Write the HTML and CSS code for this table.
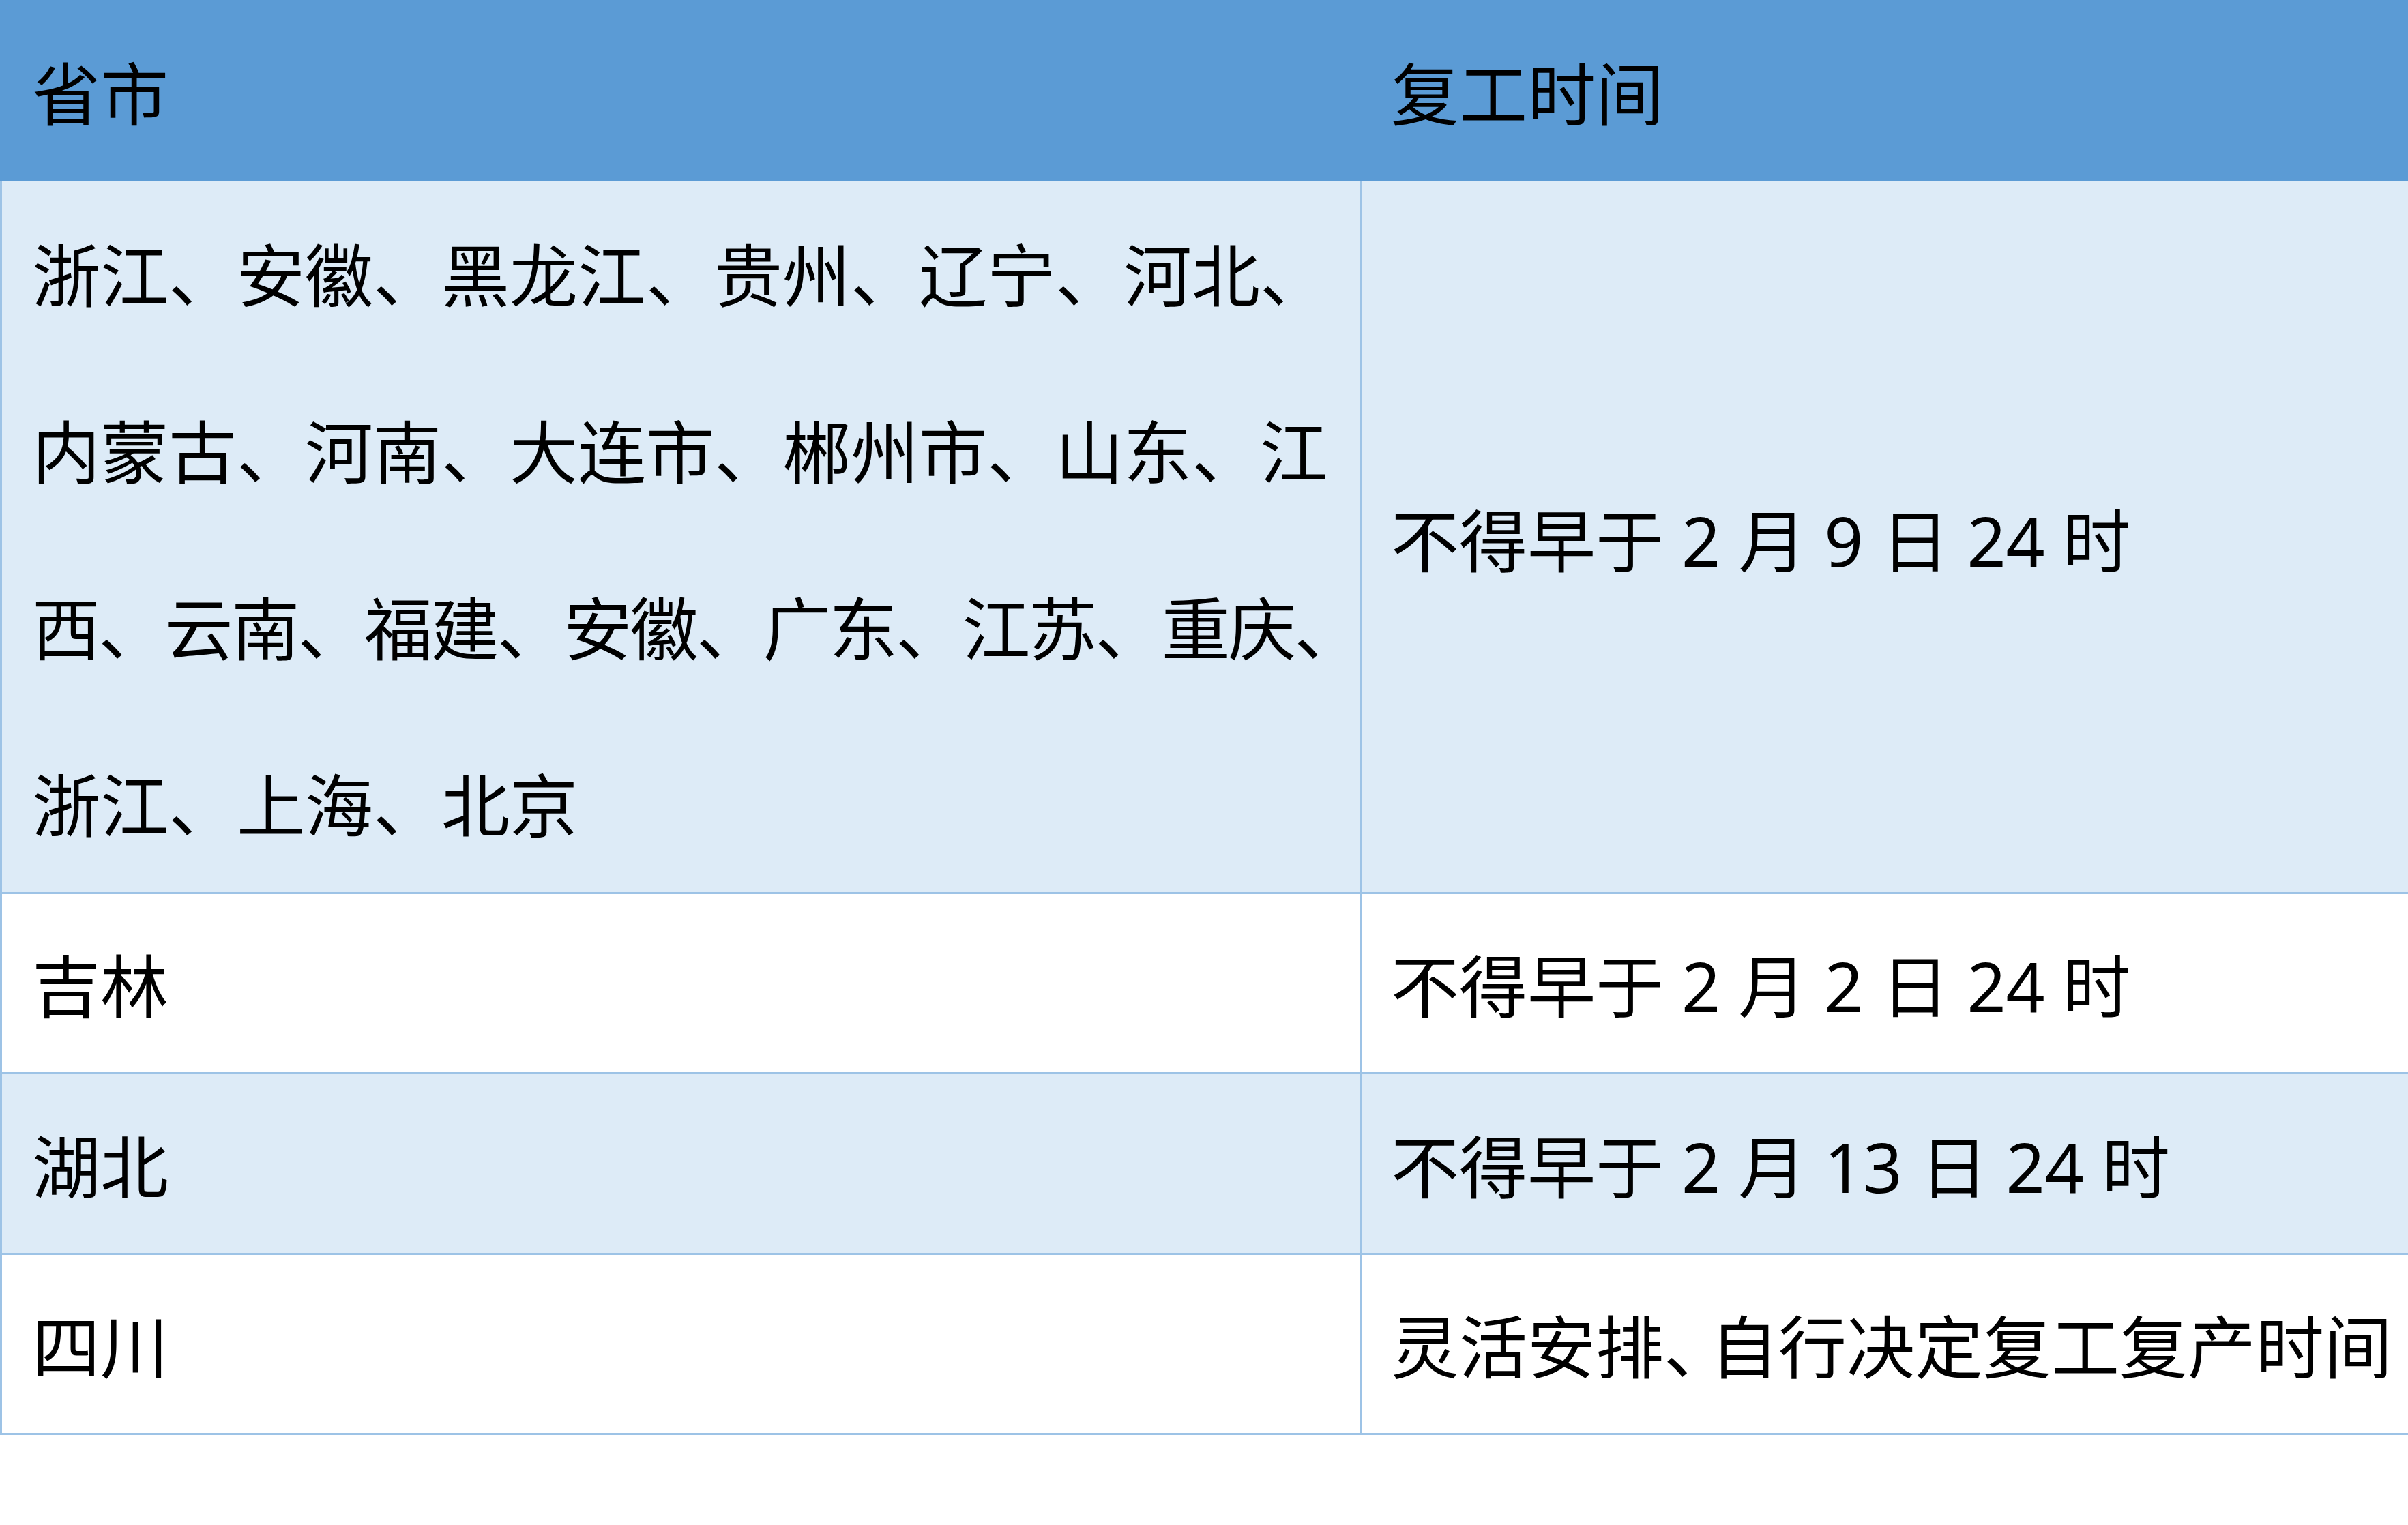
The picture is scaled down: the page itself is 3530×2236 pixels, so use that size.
FILE: index.html
```html
<!DOCTYPE html>
<html lang="zh-CN">
<head>
<meta charset="utf-8">
<title>复工时间</title>
<link rel="stylesheet" href="styles.css">
</head>
<body>
<div class="sheet">
  <div class="row head">
    <div class="cell c1">省市</div>
    <div class="cell c2">复工时间</div>
  </div>
  <div class="row band tall">
    <div class="cell c1">浙江、安徽、黑龙江、贵州、辽宁、河北、<br>内蒙古、河南、大连市、郴州市、山东、江<br><span class="tight">西、云南、福建、安徽、广东、江苏、重庆、</span><br>浙江、上海、北京</div>
    <div class="cell c2 mid">不得早于 2 月 9 日 24 时</div>
  </div>
  <div class="row plain r2">
    <div class="cell c1">吉林</div>
    <div class="cell c2">不得早于 2 月 2 日 24 时</div>
  </div>
  <div class="row band r3">
    <div class="cell c1">湖北</div>
    <div class="cell c2">不得早于 2 月 13 日 24 时</div>
  </div>
  <div class="row plain r4">
    <div class="cell c1">四川</div>
    <div class="cell c2">灵活安排<span class="half">、</span>自行决定复工复产时间</div>
  </div>
</div>
</body>
</html>
```

FILE: styles.css
```css
html, body {
  margin: 0;
  padding: 0;
  background: #ffffff;
}

body {
  font-family: "Noto Sans", "Noto Sans CJK SC", sans-serif;
  font-size: 100px;
  color: #000000;
  overflow: hidden;
}

.sheet {
  width: 3530px;
  display: flex;
  flex-direction: column;
}

.row {
  display: flex;
  border-bottom: 3px solid #9dc3e6;
}

.cell {
  white-space: nowrap;
  box-sizing: border-box;
}

.c1 {
  width: 1997px;
  flex: none;
  padding-left: 44px;
  border-left: 3px solid #9dc3e6;
  border-right: 3px solid #9dc3e6;
}

.c2 {
  flex: 1;
  padding-left: 42px;
}

.head {
  background: #5b9bd5;
  border-bottom: none;
}

.head .cell {
  height: 266px;
  line-height: 266px;
  padding-top: 4px;
}

.head .c1 {
  border-color: #5b9bd5;
}

.band {
  background: #ddebf7;
}

.plain {
  background: #ffffff;
}

.tall .c1 {
  padding-top: 8px;
  line-height: 259px;
  height: 1042px;
}

.tall .c2 {
  display: flex;
  align-items: center;
  height: 1042px;
  line-height: 259px;
  padding-top: 10px;
}

.tight {
  letter-spacing: -2.6px;
}

.r2 .cell {
  height: 261px;
  line-height: 253px;
  padding-top: 8px;
}

.r3 .cell {
  height: 262px;
  line-height: 254px;
  padding-top: 8px;
}

.r4 .cell {
  height: 261px;
  line-height: 253px;
  padding-top: 8px;
}

.half {
  display: inline-block;
  width: 0.68em;
  overflow: visible;
}
```
